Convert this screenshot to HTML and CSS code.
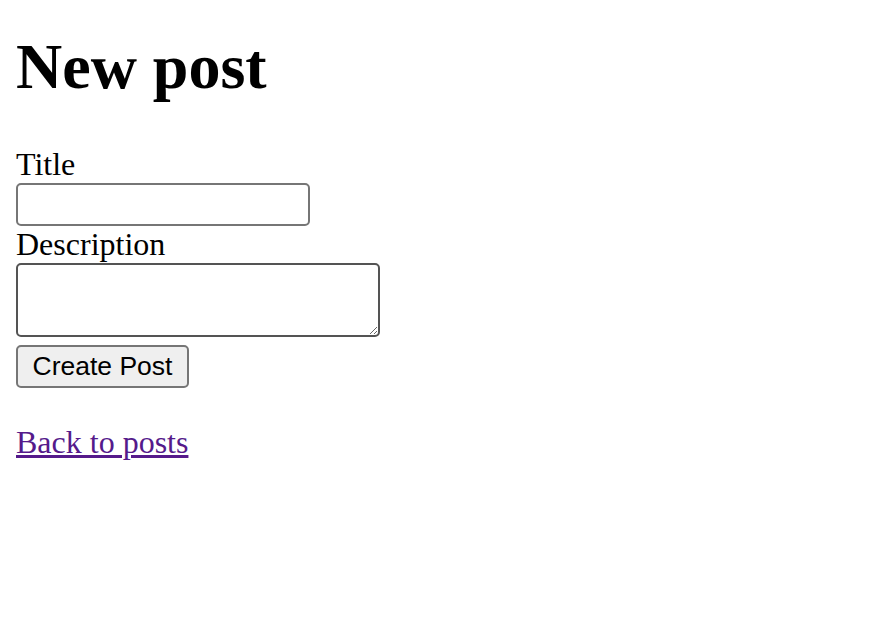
FILE: index.html
```html
<!DOCTYPE html>
<html>
<head>
<meta charset="utf-8">
<title>New post</title>
<link rel="stylesheet" href="styles.css">
</head>
<body>
<div class="page">
  <h1 class="heading">New post</h1>
  <form class="post-form">
    <div class="field">
      <label class="label" for="post_title">Title</label>
      <input class="text-input" type="text" id="post_title">
    </div>
    <div class="field">
      <label class="label" for="post_description">Description</label>
      <textarea class="text-area" id="post_description"></textarea>
    </div>
    <div class="actions">
      <button class="submit" type="button">Create Post</button>
    </div>
  </form>
  <div class="back">
    <a class="back-link" href="#">Back to posts</a>
  </div>
</div>
</body>
</html>
```

FILE: styles.css
```css
html, body {
  margin: 0;
  padding: 0;
  background: #ffffff;
}

.page {
  padding: 0 16px;
  font-family: "Liberation Serif", "Times New Roman", serif;
  font-size: 32px;
  color: #000000;
  display: flow-root;
}

.heading {
  font-size: 64px;
  font-weight: bold;
  line-height: 74px;
  margin: 30px 0 42px 0;
}

.post-form {
  margin: 0;
}

.label {
  display: block;
  line-height: 37px;
}

.text-input {
  display: block;
  box-sizing: border-box;
  width: 294px;
  height: 43px;
  margin: 0;
  border: 2px solid #767676;
  border-radius: 5px;
  background: #ffffff;
  padding: 2px 4px;
  font-size: 26px;
}

.text-area {
  display: block;
  box-sizing: border-box;
  width: 364px;
  height: 74px;
  margin: 0;
  border: 2px solid #545454;
  border-radius: 5px;
  background: #ffffff;
  padding: 4px;
  font-size: 26px;
  resize: both;
}

.actions {
  margin-top: 8px;
}

.submit {
  display: block;
  box-sizing: border-box;
  width: 173px;
  height: 43px;
  margin: 0;
  padding: 0 12px;
  border: 2px solid #767676;
  border-radius: 5px;
  background: #efefef;
  color: #000000;
  font-family: "Liberation Sans", Arial, sans-serif;
  font-size: 26.5px;
  line-height: 39px;
  text-align: center;
}

.back {
  margin-top: 36px;
  line-height: 37px;
}

.back-link {
  color: #551a8b;
  text-decoration: underline;
}
```
